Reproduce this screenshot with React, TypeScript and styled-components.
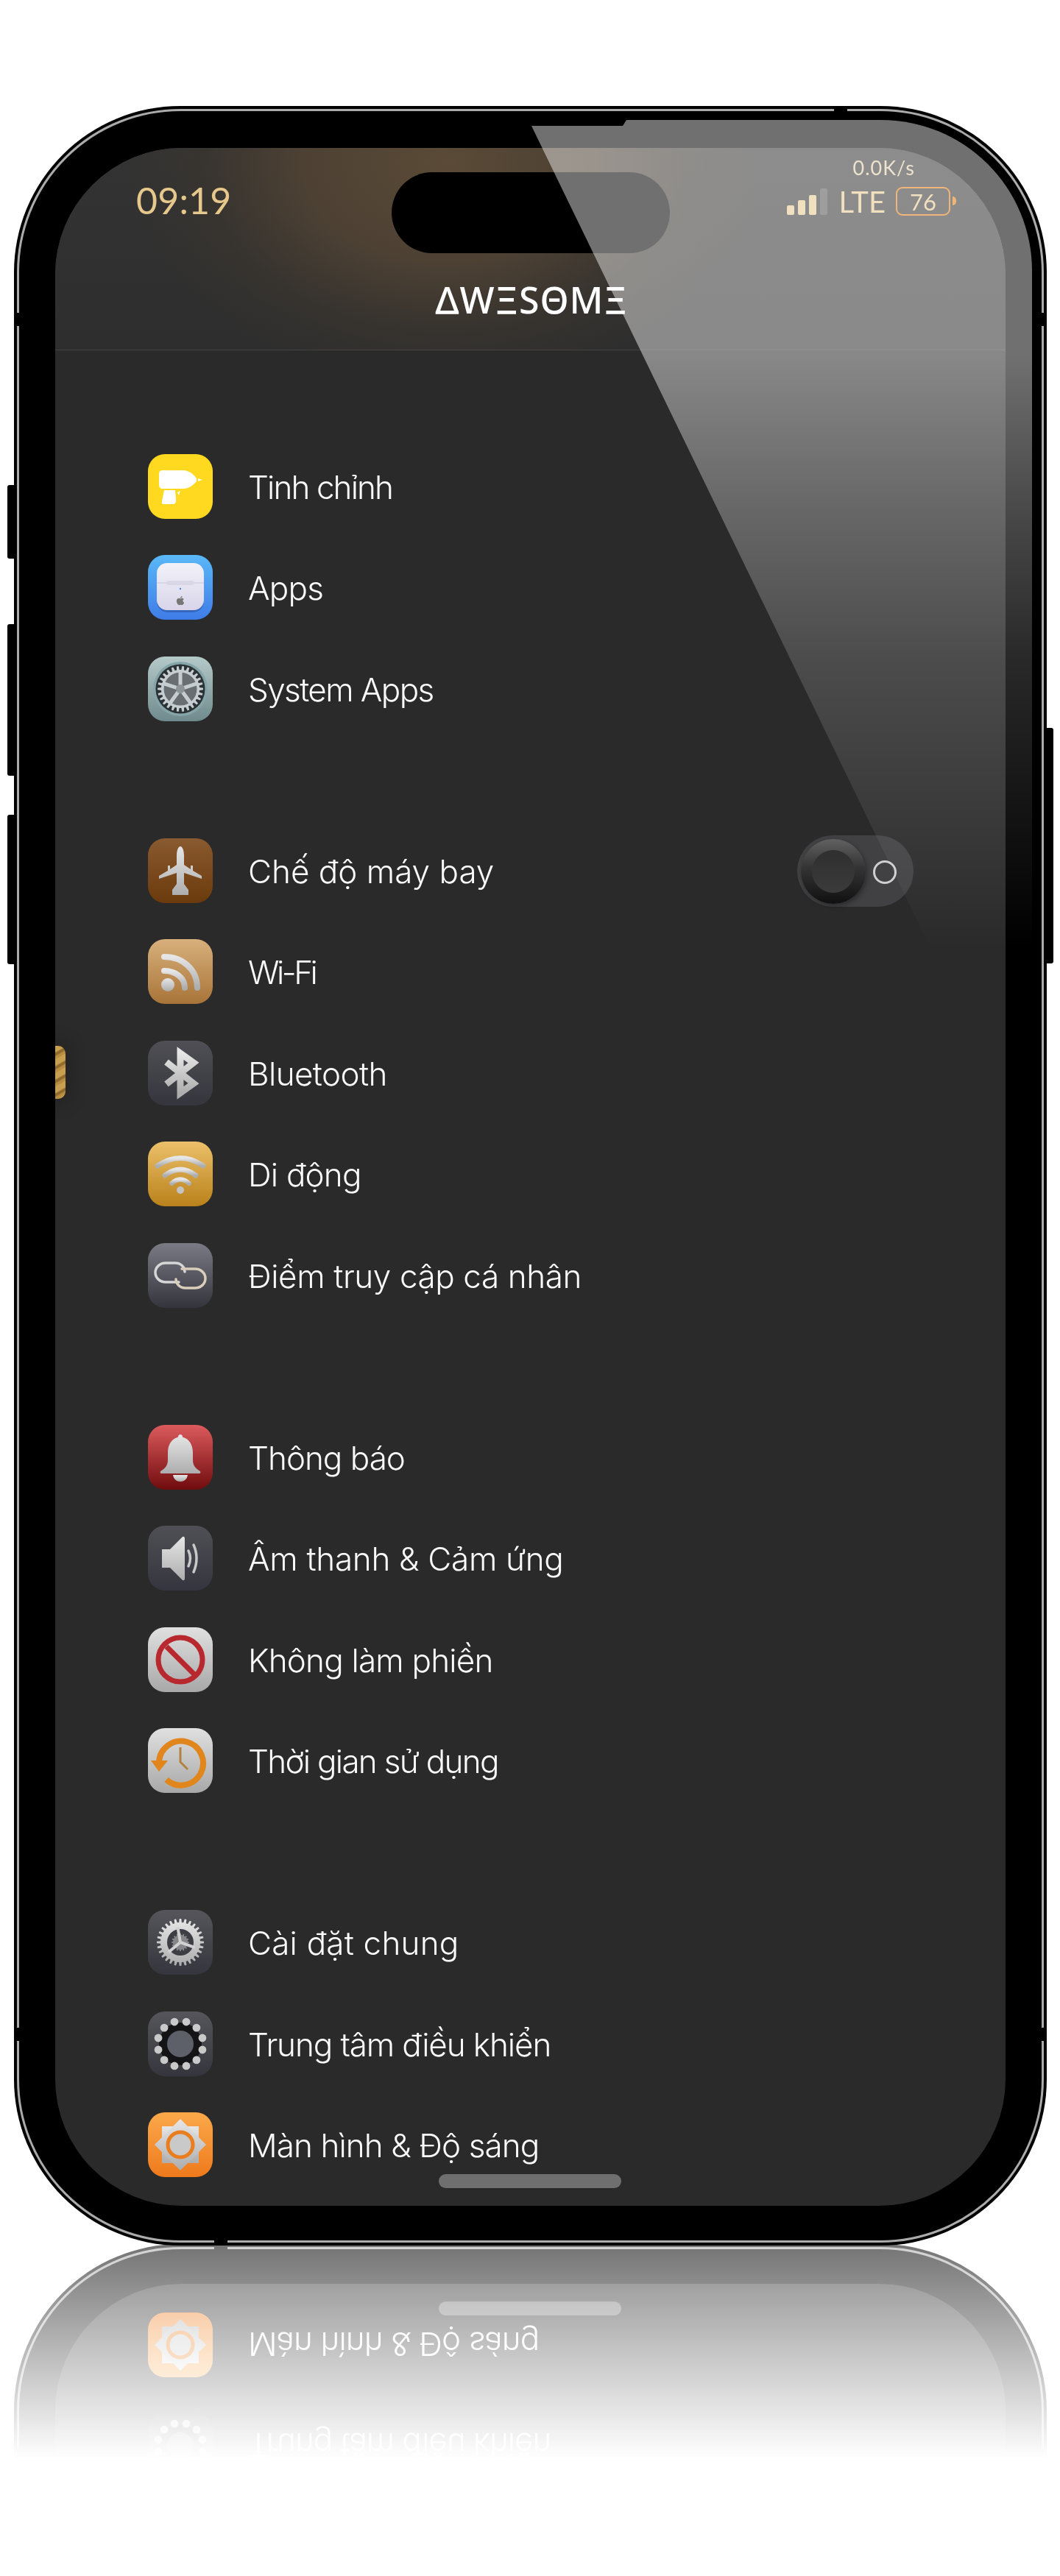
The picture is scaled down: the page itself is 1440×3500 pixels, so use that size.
import React from 'react';
import styled, {createGlobalStyle} from 'styled-components';
import {FaApple} from 'react-icons/fa';

const GlobalStyle = createGlobalStyle`
  html, body {
    margin: 0;
    padding: 0;
    background: #fff;
  }
  body {
    font-family: Inter, "Noto Sans", sans-serif;
  }
`;

const Page = styled.div`
  padding-top: 144px;
  height: 3356px;
  overflow: hidden;
  background: #fff;
`;

const Phone = styled.div`
  position: relative;
  box-sizing: border-box;
  width: 1403px;
  height: 2907px;
  margin-left: 19px;
  padding: 57px 56px 54px;
  background: #000;
  border-radius: 226px;
  -webkit-box-reflect: below -2px linear-gradient(to bottom, transparent 90%, rgba(255, 255, 255, 0.55));
  &::before {
    content: '';
    position: absolute;
    inset: 4px;
    border: 3px solid #ababab;
    border-radius: 222px;
  }
`;

const SideButton = styled.div<{$side: 'left' | 'right'; $top: number; $height: number}>`
  position: absolute;
  top: ${p => p.$top}px;
  ${p => p.$side}: -9px;
  width: 9px;
  height: ${p => p.$height}px;
  background: #000;
  border-radius: ${p => (p.$side === 'left' ? '3px 0 0 3px' : '0 3px 3px 0')};
`;

const AntennaBand = styled.div<{$x?: number; $y?: number; $edge: 'left' | 'right' | 'top' | 'bottom'}>`
  position: absolute;
  background: #000;
  ${p => p.$edge}: 0;
  ${p =>
    p.$y !== undefined
      ? `top: ${p.$y}px; width: 10px; height: 18px;`
      : `left: ${p.$x}px; width: 18px; height: 10px;`}
`;

const Screen = styled.div`
  position: relative;
  height: 100%;
  display: flex;
  flex-direction: column;
  overflow: hidden;
  background: #2a2a2a;
  border-radius: 172px;
`;

const Header = styled.header`
  flex: none;
  box-sizing: border-box;
  height: 275px;
  padding-top: 33px;
  display: flex;
  flex-direction: column;
  align-items: center;
  border-bottom: 1px solid #434343;
  background: radial-gradient(ellipse 430px 300px at 530px 20px, #5a4a36 0%, #4d4134 45%, rgba(60, 54, 46, 0.6) 75%, rgba(50, 50, 50, 0) 100%),
    linear-gradient(#333, #2e2e2e);
`;

const StatusBar = styled.div`
  width: 100%;
  display: grid;
  grid-template-columns: 1fr 378px 1fr;
`;

const Time = styled.div`
  padding: 15px 0 0 110px;
  font-family: Lato, "Noto Sans", sans-serif;
  font-size: 50px;
  line-height: 46px;
  letter-spacing: 0.2px;
  color: #e6c88c;
`;

const Island = styled.div`
  height: 110px;
  background: #000;
  border-radius: 55px;
`;

const StatusRight = styled.div`
  display: flex;
  flex-direction: column;
  align-items: flex-end;
  padding: 0 68px 0 0;
  margin-top: -20px;
`;

const Speed = styled.div`
  margin-right: 55px;
  font-family: Lato, "Noto Sans", sans-serif;
  font-size: 27px;
  line-height: 27px;
  letter-spacing: 1px;
  color: #e0cda8;
`;

const Signals = styled.div`
  display: flex;
  align-items: center;
  margin-top: 13px;
`;

const SignalBars = styled.div`
  display: flex;
  align-items: flex-end;
  gap: 5px;
  height: 36px;
  margin-right: 16px;
`;

const SignalBar = styled.span<{$h: number; $off?: boolean}>`
  width: 10px;
  height: ${p => p.$h}px;
  border-radius: 2px;
  background: ${p => (p.$off ? 'rgba(255, 255, 255, 0.16)' : '#e6c88c')};
`;

const Network = styled.div`
  margin-right: 14px;
  font-family: Lato, "Noto Sans", sans-serif;
  font-size: 40px;
  line-height: 38px;
  color: #e6c88c;
`;

const Battery = styled.div`
  box-sizing: border-box;
  position: relative;
  width: 74px;
  height: 39px;
  margin-right: 7px;
  display: flex;
  align-items: center;
  justify-content: center;
  border: 2.5px solid #e57c10;
  border-radius: 9px;
  font-family: Lato, "Noto Sans", sans-serif;
  font-size: 31px;
  color: #e6c88c;
  &::after {
    content: '';
    position: absolute;
    right: -10px;
    top: 11px;
    width: 5px;
    height: 12px;
    background: #e57c10;
    border-radius: 0 6px 6px 0;
  }
`;

const Logo = styled.div`
  margin: 38px 0 0 3px;
  font-family: "Noto Sans", sans-serif;
  font-size: 50px;
  line-height: 50px;
  font-weight: 500;
  letter-spacing: 1px;
  color: #fff;
`;

const List = styled.div`
  padding: 117px 125px 0 126px;
  display: flex;
  flex-direction: column;
  gap: 109.5px;
`;

const Group = styled.section`
  display: flex;
  flex-direction: column;
`;

const Row = styled.div`
  height: 137.5px;
  display: flex;
  align-items: center;
  gap: 48px;
`;

const Tile = styled.div<{$from: string; $to: string}>`
  flex: none;
  width: 88px;
  height: 88px;
  margin-top: -2px;
  border-radius: 23px;
  overflow: hidden;
  background: linear-gradient(${p => p.$from}, ${p => p.$to});
  svg {
    display: block;
  }
`;

const Label = styled.div<{$track: number}>`
  font-size: 44px;
  font-weight: 300;
  letter-spacing: ${p => p.$track}px;
  color: #fafafa;
  white-space: nowrap;
`;

const Toggle = styled.div`
  position: relative;
  margin-left: auto;
  box-sizing: border-box;
  width: 158px;
  height: 97px;
  display: flex;
  align-items: center;
  padding: 0 5px;
  border-radius: 49px;
  background: #414143;
`;

const Knob = styled.div`
  width: 88px;
  height: 88px;
  display: flex;
  align-items: center;
  justify-content: center;
  border-radius: 50%;
  background: linear-gradient(#616161, #333 45%, #101010);
  box-shadow: 2px 3px 6px rgba(0, 0, 0, 0.35);
`;

const KnobCap = styled.div`
  width: 58px;
  height: 58px;
  border-radius: 50%;
  background: linear-gradient(#2f2f2f, #3b3b3b);
`;

const ToggleDot = styled.div`
  box-sizing: border-box;
  width: 32px;
  height: 32px;
  margin: 2px 0 0 10px;
  border: 3px solid #cfcfcf;
  border-radius: 50%;
`;

const HomeBar = styled.div`
  position: absolute;
  left: 521px;
  bottom: 24px;
  width: 248px;
  height: 19px;
  border-radius: 10px;
  background: #6f6f6f;
`;

const EdgeTab = styled.div`
  position: absolute;
  left: 0;
  top: 1220px;
  width: 14px;
  height: 72px;
  border-radius: 0 10px 10px 0;
  background: repeating-linear-gradient(150deg, #c9a050 0 7px, #8f6a2c 9px 11px, #b98e40 13px 16px);
  box-shadow: 0 0 22px 10px rgba(0, 0, 0, 0.14);
`;

// the light falling across the glass, drawn on top of bezel and screen
const Glare = styled.div`
  position: absolute;
  top: 19px;
  left: 681px;
  width: 702px;
  height: 1140px;
  border-radius: 0 205px 0 0;
  pointer-events: none;
  background: linear-gradient(
    rgba(255, 255, 255, 0.44) 0,
    rgba(255, 255, 255, 0.44) 320px,
    rgba(255, 255, 255, 0.3) 507px,
    rgba(255, 255, 255, 0.16) 730px,
    rgba(255, 255, 255, 0.085) 917px,
    rgba(255, 255, 255, 0) 1127px
  );
  clip-path: polygon(22px 8px, 146px 8px, 151px 0, 702px 0, 702px 1137px, 570px 1137px);
`;

const Defs = styled.svg`
  display: block;
  width: 0;
  height: 0;
`;

const gearPath = (cx: number, cy: number, rOut: number, rIn: number, teeth: number) => {
  const step = (Math.PI * 2) / teeth;
  const pts: string[] = [];
  for (let i = 0; i < teeth; i++) {
    const a = i * step;
    [
      [rIn, a - step * 0.3],
      [rOut, a - step * 0.18],
      [rOut, a + step * 0.18],
      [rIn, a + step * 0.3]
    ].forEach(([r, t]) => {
      pts.push(`${(cx + r * Math.cos(t)).toFixed(2)} ${(cy + r * Math.sin(t)).toFixed(2)}`);
    });
  }
  return `M${pts.join(' L')}Z`;
};

const spokes = (count: number, start: number, from: number, to: number) =>
  Array.from({length: count}, (_, i) => {
    const a = ((start + (i * 360) / count) * Math.PI) / 180;
    return `M${44 + from * Math.cos(a)} ${44 + from * Math.sin(a)} L${44 + to * Math.cos(a)} ${44 + to * Math.sin(a)}`;
  }).join(' ');

const Art = ({children}: {children: React.ReactNode}) => (
  <svg width="88" height="88" viewBox="0 0 88 88">
    {children}
  </svg>
);

const SILVER = 'url(#silver)';

const DrillIcon = () => (
  <Art>
    <g fill="#fff">
      <path d="M20 22H48C55 22 62 27 66 33V37C62 42 55 47 48 47H20Q15 47 15 42V27Q15 22 20 22Z" />
      <path d="M68 33L74 35L68 37Z" />
      <path d="M22 49H37L38 60Q39 68 34 68H21Q18 68 19 64Z" />
      <path d="M40 52L44 50L42 56Z" />
    </g>
  </Art>
);

const CaseIcon = () => (
  <Art>
    <rect x="12" y="14" width="64" height="64" rx="15" fill="#23428c" opacity="0.45" />
    <rect x="12" y="11" width="64" height="64" rx="14" fill="url(#case)" />
    <path d="M12 38H76" stroke="#c8c5da" strokeWidth="1" />
    <rect x="25" y="35" width="38" height="6" rx="3" fill="#d9d6e6" />
    <circle cx="44" cy="46" r="1.2" fill="#3f86ee" />
    <FaApple x={37} y={55} size={14} color="#777" />
  </Art>
);

const SystemGearIcon = () => (
  <Art>
    <circle cx="44" cy="44" r="37" fill="#86a5a8" />
    <circle cx="44" cy="44" r="33.5" fill="#2b3235" />
    <path d={gearPath(44, 44, 31, 26, 26)} fill="#c6cdd0" />
    <circle cx="44" cy="44" r="23" fill="#696e72" />
    <path d={spokes(5, 270, 4, 24)} stroke="#c6cdd0" strokeWidth="5" />
    <circle cx="44" cy="44" r="24" fill="none" stroke="#c6cdd0" strokeWidth="3" />
    <circle cx="44" cy="44" r="6" fill="#8d9498" />
  </Art>
);

const PlaneIcon = () => (
  <Art>
    <path
      fill={SILVER}
      d="M44 11C47 11 49 17 49 24V36L58 42V37H61V44L73 51V55L49 47V62L55 70V77H33V70L39 62V47L15 55V51L27 44V37H30V42L39 36V24C39 17 41 11 44 11Z"
    />
  </Art>
);

const FeedIcon = () => (
  <Art>
    <circle cx="27" cy="62" r="9" fill={SILVER} />
    <g fill="none" stroke={SILVER} strokeWidth="8" strokeLinecap="round">
      <path d="M22 43C38 43 50 53 50 66" />
      <path d="M22 24C48 24 67 42 67 66" />
    </g>
  </Art>
);

const BluetoothIcon = () => (
  <Art>
    <path d="M25 29L62 58L44 71V17L62 30L25 59" fill="none" stroke={SILVER} strokeWidth="9" />
  </Art>
);

const WifiIcon = () => (
  <Art>
    <g fill="none" stroke={SILVER} strokeLinecap="round">
      <path d="M13 33Q44 12 75 33" strokeWidth="7" />
      <path d="M23 46Q44 30 65 46" strokeWidth="7" />
      <path d="M32 57Q44 46 56 57" strokeWidth="6" />
    </g>
    <circle cx="44" cy="66" r="5" fill="#c4c4c4" />
  </Art>
);

const LinkIcon = () => (
  <Art>
    <g fill="none" strokeWidth="3.5" strokeLinecap="round">
      <path d="M42 53H24C16 53 10 47 10 40C10 33 16 27 24 27H37C45 27 50 33 50 39" stroke="#d6d6d6" />
      <path d="M46 35H64C72 35 78 41 78 48C78 55 72 61 64 61H51C43 61 38 55 38 49" stroke="#d9cdbb" />
    </g>
  </Art>
);

const BellIcon = () => (
  <Art>
    <g fill={SILVER}>
      <path d="M44 13C46 13 47 14.500 47 16.500C56 19 61 27 61 38V48C61 56 66 60 71 63Q72 66 70 66H18Q16 66 17 63C22 60 27 56 27 48V38C27 27 32 19 41 16.500C41 14.500 42 13 44 13Z" />
      <path d="M34 68H54C53 74 49 77 44 77C39 77 35 74 34 68Z" />
    </g>
  </Art>
);

const SpeakerIcon = () => (
  <Art>
    <path fill={SILVER} d="M19 32H30L47 15Q50 14 50 18V71Q50 75 47 74L30 57H19Z" />
    <g fill="none" stroke="#c8c8c8" strokeWidth="3.5" strokeLinecap="round">
      <path d="M55 34Q60 44 55 55" />
      <path d="M62 26Q70 44 62 63" />
    </g>
  </Art>
);

const BlockedIcon = () => (
  <Art>
    <circle cx="44" cy="44" r="30" fill="none" stroke="#b7292e" strokeWidth="7" />
    <path d="M25 26L63 64" stroke="#b7292e" strokeWidth="7" />
  </Art>
);

const HistoryIcon = () => (
  <Art>
    <path d="M15 46A30 30 0 1 1 25 70" fill="none" stroke="#e0861c" strokeWidth="8" />
    <path d="M4 44H27L15 59Z" fill="#e0861c" />
    <path d="M44 26V46L54 56" fill="none" stroke="#b3813f" strokeWidth="3" />
  </Art>
);

const SettingsIcon = () => (
  <Art>
    <path d={gearPath(44, 44, 32, 27, 28)} fill={SILVER} />
    <circle cx="44" cy="44" r="18" fill="#3d3d44" />
    <path d={gearPath(44, 44, 12, 10, 16)} fill="#85858a" />
    <path d={spokes(3, 20, 0, 21)} stroke="#d0d0d0" strokeWidth="4" />
  </Art>
);

const DialIcon = () => (
  <Art>
    <circle cx="44" cy="44" r="29" fill="#141416" />
    {Array.from({length: 12}, (_, i) => {
      const a = ((i * 30 + 15) * Math.PI) / 180;
      return <circle key={i} cx={44 + 31 * Math.cos(a)} cy={44 + 31 * Math.sin(a)} r="5.400" fill="#c9c9c9" />;
    })}
    <circle cx="44" cy="44" r="18" fill="#5d5f69" />
  </Art>
);

const SunIcon = () => (
  <Art>
    <g fill={SILVER}>
      <rect x="19" y="19" width="50" height="50" />
      <path d="M44 9L79 44L44 79L9 44Z" />
    </g>
    <circle cx="44" cy="44" r="17" fill="#c9c9c9" stroke="#ea7d1e" strokeWidth="5" />
  </Art>
);

interface IRow {
  label: string;
  track: number;
  from: string;
  to: string;
  Icon: React.ComponentType;
  toggle?: boolean;
}

const groups: IRow[][] = [
  [
    {label: 'Tinh chỉnh', track: -1.9, from: '#ffd91f', to: '#ffd91f', Icon: DrillIcon},
    {label: 'Apps', track: -0.8, from: '#5ab8f8', to: '#3f7ce8', Icon: CaseIcon},
    {label: 'System Apps', track: -1.6, from: '#b5c9c9', to: '#6f8a8d', Icon: SystemGearIcon}
  ],
  [
    {label: 'Chế độ máy bay', track: 0, from: '#8a5a30', to: '#6b3a0c', Icon: PlaneIcon, toggle: true},
    {label: 'Wi-Fi', track: -3.5, from: '#d8b07c', to: '#a87438', Icon: FeedIcon},
    {label: 'Bluetooth', track: -0.6, from: '#4f4f55', to: '#35353d', Icon: BluetoothIcon},
    {label: 'Di động', track: -0.8, from: '#ecc06a', to: '#b9811a', Icon: WifiIcon},
    {label: 'Điểm truy cập cá nhân', track: -0.4, from: '#7a7b85', to: '#33343c', Icon: LinkIcon}
  ],
  [
    {label: 'Thông báo', track: -1, from: '#dc5a5c', to: '#700c0e', Icon: BellIcon},
    {label: 'Âm thanh & Cảm ứng', track: -0.3, from: '#4f4f55', to: '#35353f', Icon: SpeakerIcon},
    {label: 'Không làm phiền', track: -0.8, from: '#e0e0e0', to: '#a8a8a8', Icon: BlockedIcon},
    {label: 'Thời gian sử dụng', track: -1.7, from: '#e0e0e0', to: '#a8a8a8', Icon: HistoryIcon}
  ],
  [
    {label: 'Cài đặt chung', track: 0.2, from: '#55555b', to: '#35353d', Icon: SettingsIcon},
    {label: 'Trung tâm điều khiển', track: -1.1, from: '#55555b', to: '#35353d', Icon: DialIcon},
    {label: 'Màn hình & Độ sáng', track: -0.9, from: '#fba94a', to: '#ee7a1c', Icon: SunIcon}
  ]
];

const App = () => (
  <Page>
    <GlobalStyle />
    <Defs>
      <defs>
        <linearGradient id="silver" x1="0" y1="0" x2="0" y2="1">
          <stop offset="0" stopColor="#e6e6e6" />
          <stop offset="1" stopColor="#adadad" />
        </linearGradient>
        <linearGradient id="case" x1="0" y1="0" x2="0" y2="1">
          <stop offset="0" stopColor="#f2f1f8" />
          <stop offset="1" stopColor="#d9d5ea" />
        </linearGradient>
      </defs>
    </Defs>
    <Phone>
      <SideButton $side="left" $top={515} $height={100} />
      <SideButton $side="left" $top={704} $height={206} />
      <SideButton $side="left" $top={963} $height={203} />
      <SideButton $side="right" $top={845} $height={320} />
      <AntennaBand $edge="left" $y={281} />
      <AntennaBand $edge="right" $y={281} />
      <AntennaBand $edge="left" $y={2611} />
      <AntennaBand $edge="right" $y={2611} />
      <AntennaBand $edge="top" $x={1114} />
      <AntennaBand $edge="bottom" $x={272} />
      <Screen>
        <Header>
          <StatusBar>
            <Time>09:19</Time>
            <Island />
            <StatusRight>
              <Speed>0.0K/s</Speed>
              <Signals>
                <SignalBars>
                  <SignalBar $h={13} />
                  <SignalBar $h={20} />
                  <SignalBar $h={27} />
                  <SignalBar $h={36} $off />
                </SignalBars>
                <Network>LTE</Network>
                <Battery>76</Battery>
              </Signals>
            </StatusRight>
          </StatusBar>
          <Logo>ΔWΞSΘMΞ</Logo>
        </Header>
        <List>
          {groups.map((group, i) => (
            <Group key={i}>
              {group.map(({label, track, from, to, Icon, toggle}) => (
                <Row key={label}>
                  <Tile $from={from} $to={to}>
                    <Icon />
                  </Tile>
                  <Label $track={track}>{label}</Label>
                  {toggle && (
                    <Toggle>
                      <Knob>
                        <KnobCap />
                      </Knob>
                      <ToggleDot />
                    </Toggle>
                  )}
                </Row>
              ))}
            </Group>
          ))}
        </List>
        <EdgeTab />
        <HomeBar />
      </Screen>
      <Glare />
    </Phone>
  </Page>
);

export default App;
